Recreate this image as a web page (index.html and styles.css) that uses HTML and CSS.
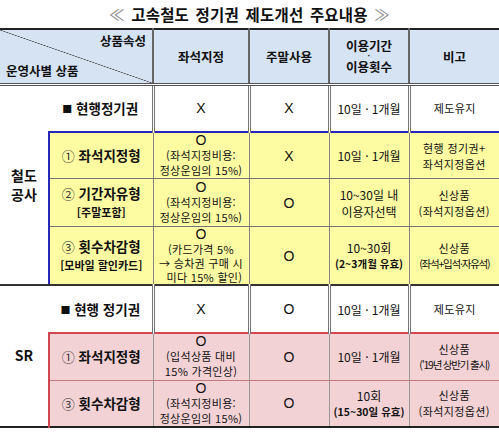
FILE: index.html
```html
<!DOCTYPE html>
<html lang="ko">
<head>
<meta charset="utf-8">
<link rel="stylesheet" href="styles.css">
</head>
<body>
<div class="page">
  <h1 class="title"><span class="ang">≪</span> 고속철도 정기권 제도개선 주요내용 <span class="ang">≫</span></h1>
  <table class="grid">
    <colgroup>
      <col class="c1"><col class="c2"><col class="c3"><col class="c4"><col class="c5"><col class="c6">
    </colgroup>
    <thead>
      <tr class="hrow">
        <th colspan="2" class="diag">
          <div class="diag-top">상품속성</div>
          <div class="diag-bot">운영사별 상품</div>
        </th>
        <th>좌석지정</th>
        <th>주말사용</th>
        <th class="period"><div>이용기간</div><div class="dot">·</div><div>이용횟수</div></th>
        <th class="last">비고</th>
      </tr>
    </thead>
    <tbody>
      <tr class="r-a">
        <td rowspan="4" class="comp comp-rail">철도<br>공사</td>
        <td class="prod"><span class="sq">■</span> 현행정기권</td>
        <td class="mark"><span class="ox">X</span></td>
        <td class="mark"><span class="ox">X</span></td>
        <td class="per">10일 · 1개월</td>
        <td class="note">제도유지</td>
      </tr>
      <tr class="y y1">
        <td class="prod first"><span class="num">①</span> 좌석지정형</td>
        <td class="mark"><div class="ox">O</div><div class="sub">(좌석지정비용:<br>정상운임의 15%)</div></td>
        <td class="mark"><span class="ox">X</span></td>
        <td class="per">10일 · 1개월</td>
        <td class="note">현행 정기권+<br>좌석지정옵션</td>
      </tr>
      <tr class="y y2">
        <td class="prod first"><span class="num">②</span> 기간자유형<div class="psub">[주말포함]</div></td>
        <td class="mark"><div class="ox">O</div><div class="sub">(좌석지정비용:<br>정상운임의 15%)</div></td>
        <td class="mark"><span class="ox">O</span></td>
        <td class="per">10~30일 내<br>이용자선택</td>
        <td class="note">신상품<br>(좌석지정옵션)</td>
      </tr>
      <tr class="y y3">
        <td class="prod first"><span class="num">③</span> 횟수차감형<div class="psub">[모바일 할인카드]</div></td>
        <td class="mark"><div class="ox">O</div><div class="sub sub4">(카드가격 5%<br>→ 승차권 구매 시<br>&nbsp;&nbsp;미다 15% 할인)</div></td>
        <td class="mark"><span class="ox">O</span></td>
        <td class="per">10~30회<div class="psm">(2~3개월 유효)</div></td>
        <td class="note">신상품<div class="tight">(좌석+입석·자유석)</div></td>
      </tr>
      <tr class="r-b">
        <td rowspan="3" class="comp comp-sr">SR</td>
        <td class="prod"><span class="sq">■</span> 현행 정기권</td>
        <td class="mark"><span class="ox">X</span></td>
        <td class="mark"><span class="ox">O</span></td>
        <td class="per">10일 · 1개월</td>
        <td class="note">제도유지</td>
      </tr>
      <tr class="p p1">
        <td class="prod first"><span class="num">①</span> 좌석지정형</td>
        <td class="mark"><div class="ox">O</div><div class="sub">(입석상품 대비<br>15% 가격인상)</div></td>
        <td class="mark"><span class="ox">O</span></td>
        <td class="per">10일 · 1개월</td>
        <td class="note">신상품<div class="tight">('19년 상반기 출시)</div></td>
      </tr>
      <tr class="p p2">
        <td class="prod first"><span class="num">③</span> 횟수차감형</td>
        <td class="mark"><div class="ox">O</div><div class="sub">(좌석지정비용:<br>정상운임의 15%)</div></td>
        <td class="mark"><span class="ox">O</span></td>
        <td class="per">10회<div class="psm">(15~30일 유효)</div></td>
        <td class="note">신상품<br>(좌석지정옵션)</td>
      </tr>
    </tbody>
  </table>
</div>
</body>
</html>
```

FILE: styles.css
```css
html, body {
  margin: 0;
  padding: 0;
  background: #ffffff;
}
body {
  font-family: "Noto Sans CJK KR", "Noto Sans", sans-serif;
  color: #111;
  width: 499px;
  height: 432px;
  overflow: hidden;
}
.page {
  padding-top: 4px;
}
.title {
  margin: 0;
  height: 24px;
  font-size: 15.5px;
  line-height: 20px;
  font-weight: 700;
  text-align: center;
  letter-spacing: 0.2px;
  word-spacing: 2px;
}
.title .ang {
  color: #888;
  font-weight: 400;
}
.grid {
  width: 499px;
  table-layout: fixed;
  border-collapse: collapse;
  border-top: 2px solid #222;
  border-bottom: 2px solid #222;
}
.c1 { width: 49px; }
.c2 { width: 104px; }
.c3 { width: 96px; }
.c4 { width: 80px; }
.c5 { width: 80px; }
.c6 { width: 90px; }

th, td {
  padding: 0;
  text-align: center;
  vertical-align: middle;
}
.hrow {
  height: 55px;
  background: #d6e3f3;
}
.hrow th {
  font-size: 12.5px;
  font-weight: 700;
  line-height: 15px;
  border-right: 2px solid #666;
  border-bottom: 3px double #555;
}
.hrow th.last { border-right: none; }
.diag {
  background: linear-gradient(to top right, transparent calc(50% - 0.6px), #444 50%, transparent calc(50% + 0.6px));
  padding: 0 6px !important;
}
.diag-top {
  text-align: right;
  margin-top: -2px;
}
.diag-bot {
  text-align: left;
  margin-top: 15px;
}
.hrow th.period div {
  line-height: 14px;
}
.hrow th.period div.dot {
  font-family: "Liberation Sans", sans-serif;
  font-size: 9px;
  line-height: 7px;
  height: 7px;
}

tbody td {
  border-left: 3px double #777;
}
tbody td.comp {
  border-left: none;
  font-size: 14px;
  font-weight: 700;
  line-height: 19px;
}
.comp-rail { border-bottom: 2px solid #333; }
.r-a { height: 48px; }
.r-a td.prod, .r-b td.prod { border-left: none; }
.prod {
  font-size: 13.5px;
  font-weight: 700;
  line-height: 17px;
  text-align: center;
}
.sq {
  font-size: 10px;
  vertical-align: 1px;
}
.num {
  font-weight: 400;
  font-size: 13px;
  color: #333;
}
.psub {
  font-size: 11px;
  line-height: 15px;
  margin-top: 3px;
}
.mark {
  font-size: 13px;
  line-height: 15px;
}
.ox {
  font-family: "Liberation Sans", "Noto Sans", sans-serif;
  font-size: 14px;
  line-height: 15px;
}
.sub {
  font-size: 11px;
  line-height: 15px;
  letter-spacing: 0.3px;
}
.sub4 {
  line-height: 14px;
}
.per {
  font-size: 12px;
  line-height: 17px;
}
.psm {
  font-size: 10.5px;
  line-height: 16px;
  font-weight: 700;
}
.note {
  font-size: 11px;
  line-height: 16px;
  letter-spacing: 0.4px;
}
.tight {
  letter-spacing: -1.2px;
  font-size: 10.5px;
}

/* yellow group */
.y td {
  background: #fdfca3;
  border-left: 1px solid #888;
  border-bottom: 1px solid #777;
}
.y td.first { border-left: 2px solid #2828b8; }
.y1 td { border-top: 2px solid #2828b8; }
.y1 { height: 46px; }
.y2 { height: 48px; }
.y3 { height: 56px; }
.y3 td { border-bottom: 2px solid #333; }

/* plain rows */
.r-b { height: 48px; }

/* pink group */
.p td {
  background: #f3d2d5;
  border-left: 1px solid #999;
}
.p td.first { border-left: 2px solid #d0474f; }
.p1 td { border-top: 2px solid #d0474f; border-bottom: 1px solid #c07a80; }
.p1 { height: 47px; }
.p2 { height: 44px; }
```
